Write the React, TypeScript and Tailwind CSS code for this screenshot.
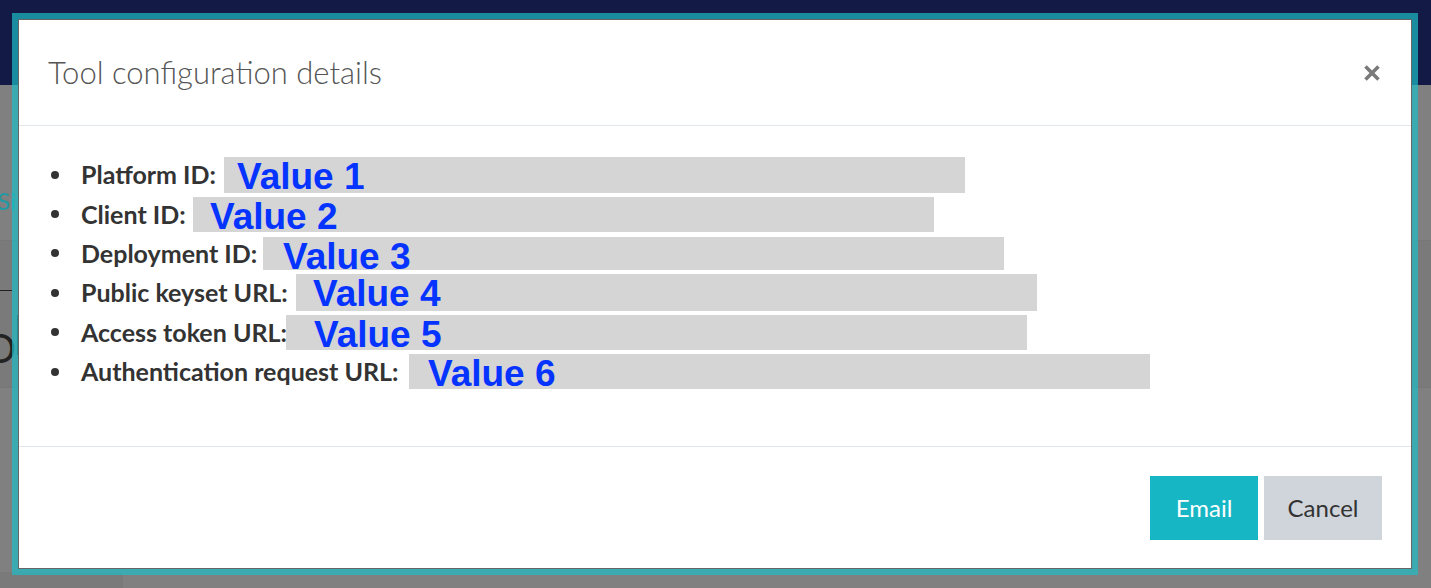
const ROWS = [
  { label: "Platform ID:", boxX: 224, h: 36, textOff: 13, value: "Value 1" },
  { label: "Client ID:", boxX: 193, h: 35, textOff: 17, value: "Value 2" },
  { label: "Deployment ID:", boxX: 263, h: 33, textOff: 20, value: "Value 3" },
  { label: "Public keyset URL:", boxX: 296, h: 37, textOff: 17, value: "Value 4" },
  { label: "Access token URL:", boxX: 286, h: 35, textOff: 28, value: "Value 5" },
  { label: "Authentication request URL:", boxX: 409, h: 35, textOff: 19, value: "Value 6" },
];

const sans = { fontFamily: "Lato, 'Open Sans', sans-serif" };

function CloseIcon() {
  return (
    <svg width="18" height="18" viewBox="0 0 18 18" className="block">
      <path d="M2.5 2.5 L15.5 15.5 M15.5 2.5 L2.5 15.5" stroke="#7a7a7a" strokeWidth="3.6" strokeLinecap="butt" />
    </svg>
  );
}

export default function App() {
  return (
    <div className="relative w-[1431px] h-[588px] overflow-hidden bg-[#808080]" style={sans}>
      {/* page behind the overlay */}
      <div className="h-[85px] bg-[#121a45]" />
      <div className="relative h-[503px]">
        <div className="absolute left-[-3px] top-[104px] text-[24px] leading-none text-[#1f9aa6]">Site</div>
        <div className="absolute left-0 right-0 top-[155px] h-[147px] border-t border-[#777] bg-[#7a7a7a]" />
        <div className="absolute left-0 w-[12px] top-[205px] h-px bg-[#222]" />
        <div className="absolute left-[-16px] top-[243px] text-[40px] leading-none text-[#222]">O</div>
        <div className="absolute left-[17px] top-[230px] w-px h-[40px] bg-[#222]" />
        <div className="absolute left-0 right-0 top-[302px] border-t border-[#777]" />
        <div className="absolute left-0 w-[123px] top-[487px] h-[20px] bg-[#7a7a7a]" />
      </div>

      {/* modal */}
      <div className="absolute left-[12px] top-[13px] w-[1406px] h-[562px] border-[6px] border-[rgba(30,190,198,0.7)]">
        <div className="flex h-full flex-col border border-[#666] bg-white">
          <div className="flex h-[106px] items-center justify-between border-b border-[#e1e6ec] pl-[29px] pr-[30px]">
            <h2 className="text-[31px] font-light leading-none text-[#555]">Tool configuration details</h2>
            <CloseIcon />
          </div>

          <div className="flex h-[321px] flex-col border-b border-[#e1e6ec] pl-[32px] pt-[29px]">
            {ROWS.map((row) => (
              <div key={row.label} className="flex h-[39.4px] items-center">
                <span className="h-[8px] w-[8px] shrink-0 rounded-full bg-[#333]" />
                <span
                  className="shrink-0 pl-[22px] text-[25px] font-bold leading-none text-[#333] whitespace-nowrap"
                  style={{ width: row.boxX - 59 }}
                >
                  {row.label}
                </span>
                <div className="w-[741px] shrink-0 bg-[#d5d5d5]" style={{ height: row.h }}>
                  <span
                    className="block pt-[1px] text-[37px] font-bold leading-none text-[#0533ff]"
                    style={{ fontFamily: "'Liberation Sans', Arial, sans-serif", paddingLeft: row.textOff }}
                  >
                    {row.value}
                  </span>
                </div>
              </div>
            ))}
          </div>

          <div className="flex flex-1 items-center justify-end gap-[6px] pr-[29px]">
            <button className="h-[64px] w-[108px] bg-[#17b6c4] text-[24px] leading-none text-white">Email</button>
            <button className="h-[64px] w-[118px] bg-[#d0d5dc] text-[24px] leading-none text-[#333]">Cancel</button>
          </div>
        </div>
      </div>
    </div>
  );
}
